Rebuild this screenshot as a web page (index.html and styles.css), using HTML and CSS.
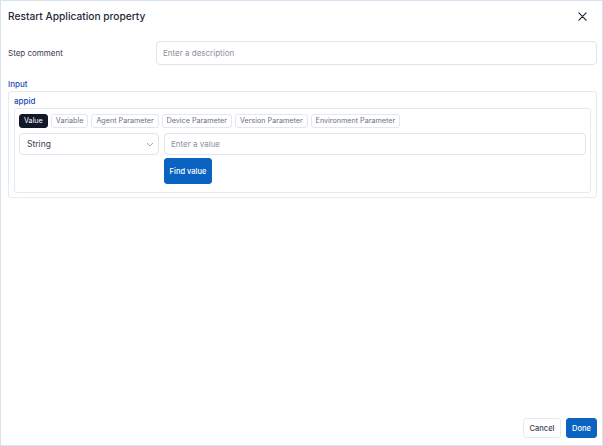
FILE: index.html
```html
<!DOCTYPE html>
<html lang="en">
<head>
    <meta charset="UTF-8">
    <meta name="viewport" content="width=device-width, initial-scale=1.0">
    <title>Restart Application property</title>
    <link rel="stylesheet" href="styles.css">
</head>
<body>
    <div class="dialog">
        <div class="header">
            <h1>Restart Application property</h1>
            <button class="close" aria-label="Close">
                <svg width="9" height="9" viewBox="0 0 10 10"><path d="M1 1L9 9M9 1L1 9" stroke="#1f2937" stroke-width="1.3" stroke-linecap="round"/></svg>
            </button>
        </div>

        <div class="step-row">
            <label class="step-label">Step comment</label>
            <input class="text-input step-input" type="text" placeholder="Enter a description">
        </div>

        <div class="section-label">Input</div>
        <div class="card">
            <div class="param-name">appid</div>
            <div class="inner-card">
                <div class="tabs">
                    <span class="tab active">Value</span>
                    <span class="tab">Variable</span>
                    <span class="tab">Agent Parameter</span>
                    <span class="tab">Device Parameter</span>
                    <span class="tab">Version Parameter</span>
                    <span class="tab">Environment Parameter</span>
                </div>
                <div class="value-row">
                    <div class="select">
                        <span>String</span>
                        <svg width="8" height="5" viewBox="0 0 8 5"><path d="M1 1L4 4L7 1" fill="none" stroke="#9ca3af" stroke-width="0.9"/></svg>
                    </div>
                    <div class="value-col">
                        <input class="text-input value-input" type="text" placeholder="Enter a value">
                        <button class="btn primary find">Find value</button>
                    </div>
                </div>
            </div>
        </div>

        <div class="footer">
            <button class="btn cancel">Cancel</button>
            <button class="btn primary done">Done</button>
        </div>
    </div>
</body>
</html>
```

FILE: styles.css
```css
* {
    box-sizing: border-box;
}
body {
    margin: 0;
    font-family: Inter, "Noto Sans", sans-serif;
    background-color: #fff;
    color: #1f2937;
}
.dialog {
    width: 603px;
    height: 446px;
    border: 1px solid #d6e4f2;
    display: flex;
    flex-direction: column;
    padding: 0 5px 0 7px;
}
.header {
    height: 30px;
    display: flex;
    align-items: center;
    justify-content: space-between;
}
h1 {
    margin: 0;
    font-size: 10.2px;
    font-weight: 500;
    color: #1f2937;
}
.close {
    border: none;
    background: none;
    padding: 0;
    margin-right: 10px;
    display: flex;
    cursor: pointer;
}
.step-row {
    display: flex;
    align-items: center;
    margin-top: 10px;
}
.step-label {
    width: 148px;
    font-size: 8px;
    color: #374151;
}
.text-input {
    height: 24px;
    border: 1px solid #dde5ee;
    border-radius: 4px;
    padding: 0 6px;
    font-family: inherit;
    font-size: 8px;
    outline: none;
}
.text-input::placeholder {
    color: #8a919c;
}
.step-input {
    flex: 1;
}
.section-label {
    margin-top: 12px;
    height: 14px;
    line-height: 14px;
    font-size: 8px;
    font-weight: 500;
    color: #2448b8;
}
.card {
    border: 1px solid #e6ebf1;
    border-radius: 3px;
    padding: 2px 5px 4px 5px;
}
.param-name {
    height: 14px;
    line-height: 14px;
    font-size: 8px;
    font-weight: 500;
    color: #2448b8;
}
.inner-card {
    border: 1px solid #e6ebf1;
    border-radius: 3px;
    padding: 5px 4px 8px 4px;
}
.tabs {
    display: flex;
    gap: 3px;
}
.tab {
    height: 14px;
    line-height: 12px;
    padding: 0 4px;
    border: 1px solid #e3e8ee;
    border-radius: 3px;
    font-size: 7.2px;
    color: #6b7280;
}
.tab.active {
    background-color: #111827;
    border-color: #111827;
    color: #fff;
}
.value-row {
    display: flex;
    gap: 5px;
    margin-top: 5px;
}
.select {
    width: 140px;
    height: 22px;
    border: 1px solid #dde5ee;
    border-radius: 4px;
    display: flex;
    align-items: center;
    justify-content: space-between;
    padding: 0 4px 0 7px;
    font-size: 8.5px;
    color: #374151;
}
.value-col {
    flex: 1;
    display: flex;
    flex-direction: column;
    align-items: flex-start;
    gap: 3px;
}
.value-input {
    width: 100%;
    height: 22px;
}
.btn {
    font-family: inherit;
    font-size: 7.5px;
    font-weight: 500;
    border-radius: 3px;
    white-space: nowrap;
    cursor: pointer;
}
.primary {
    background-color: #0b63c1;
    border: 1px solid #0b63c1;
    color: #fff;
}
.find {
    width: 48px;
    height: 26px;
    padding: 0;
}
.footer {
    margin-top: auto;
    display: flex;
    justify-content: flex-end;
    gap: 5px;
    padding-bottom: 7px;
}
.footer .btn {
    height: 20px;
    padding: 0;
}
.cancel {
    width: 38px;
    background-color: #fff;
    border: 1px solid #e6ebf1;
    color: #374151;
}
.done {
    width: 31px;
}
```
